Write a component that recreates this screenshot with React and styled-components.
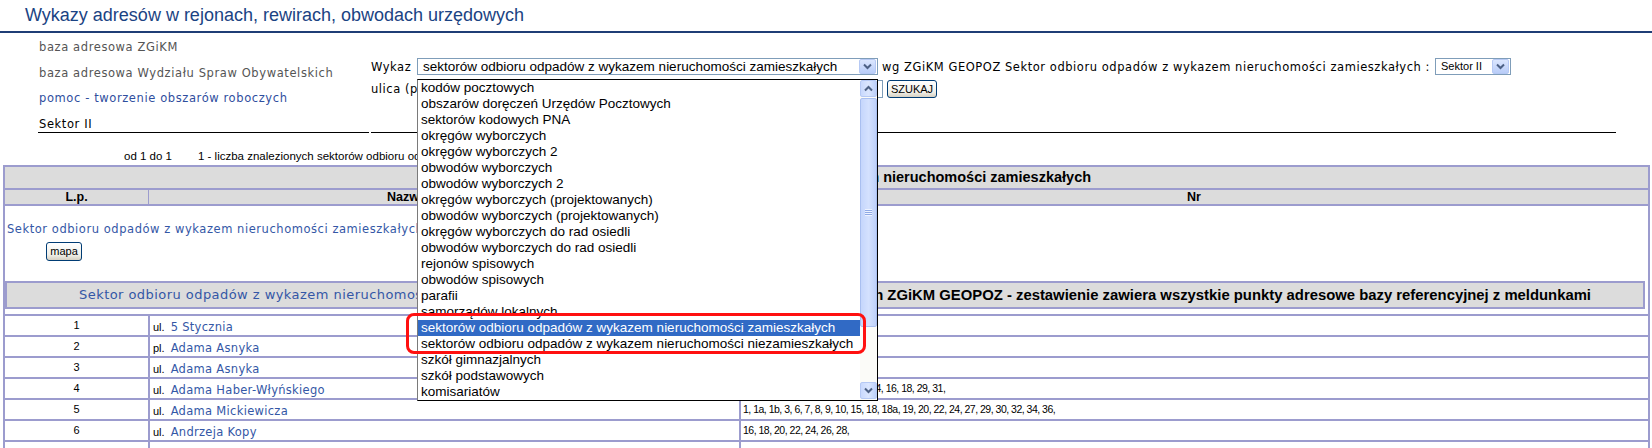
import React from 'react';
import styled, { createGlobalStyle } from 'styled-components';

const VERDANA = `"DejaVu Sans", Verdana, sans-serif`;
const ARIAL = `"Liberation Sans", Arial, sans-serif`;
const LINE = '#9c9cce';
const LINK = '#3457a6';

const GlobalStyle = createGlobalStyle`
  html, body {
    margin: 0;
    padding: 0;
    background: #ffffff;
  }
  body {
    font-family: ${VERDANA};
    overflow: hidden;
  }
`;

const options = [
  'kodów pocztowych',
  'obszarów doręczeń Urzędów Pocztowych',
  'sektorów kodowych PNA',
  'okręgów wyborczych',
  'okręgów wyborczych 2',
  'obwodów wyborczych',
  'obwodów wyborczych 2',
  'okręgów wyborczych (projektowanych)',
  'obwodów wyborczych (projektowanych)',
  'okręgów wyborczych do rad osiedli',
  'obwodów wyborczych do rad osiedli',
  'rejonów spisowych',
  'obwodów spisowych',
  'parafii',
  'samorządów lokalnych',
  'sektorów odbioru odpadów z wykazem nieruchomości zamieszkałych',
  'sektorów odbioru odpadów z wykazem nieruchomości niezamieszkałych',
  'szkół gimnazjalnych',
  'szkół podstawowych',
  'komisariatów',
];

const rows = [
  { lp: '1', type: 'ul.', name: '5 Stycznia', nr: '1, 2, 3, 5,' },
  { lp: '2', type: 'pl.', name: 'Adama Asnyka', nr: '1, 2, 4,' },
  { lp: '3', type: 'ul.', name: 'Adama Asnyka', nr: '2, 3, 5, 7, 9,' },
  { lp: '4', type: 'ul.', name: 'Adama Haber-Włyńskiego', nr: '1, 2, 4, 5, 6, 7, 8, 9, 10, 11, 12, 14, 16, 18, 29, 31,' },
  { lp: '5', type: 'ul.', name: 'Adama Mickiewicza', nr: '1, 1a, 1b, 3, 6, 7, 8, 9, 10, 15, 18, 18a, 19, 20, 22, 24, 27, 29, 30, 32, 34, 36,' },
  { lp: '6', type: 'ul.', name: 'Andrzeja Kopy', nr: '16, 18, 20, 22, 24, 26, 28,' },
  { lp: '', type: '', name: '', nr: '' },
];

function Chevron({ up }) {
  return (
    <svg width="9" height="7" viewBox="0 0 9 7">
      <path
        d={up ? 'M1 5.5 L4.5 2 L8 5.5' : 'M1 1.5 L4.5 5 L8 1.5'}
        fill="none"
        stroke="#4d6185"
        strokeWidth="2"
      />
    </svg>
  );
}

export default function App() {
  return (
    <Page>
      <GlobalStyle />
      <TitleBar>
        <Title>Wykazy adresów w rejonach, rewirach, obwodach urzędowych</Title>
      </TitleBar>

      <Top>
        <LeftCol>
          <LeftLink $color="#555555">baza adresowa ZGiKM</LeftLink>
          <LeftLink $color="#555555">baza adresowa Wydziału Spraw Obywatelskich</LeftLink>
          <LeftLink $color="#2f4e9e">pomoc - tworzenie obszarów roboczych</LeftLink>
          <SectorName>Sektor II</SectorName>
        </LeftCol>
        <RightCol>
          <FormRow $h={17}>
            <FieldLabel>Wykaz</FieldLabel>
            <SelectBox $w={461}>
              <SelectText $size={13.5}>sektorów odbioru odpadów z wykazem nieruchomości zamieszkałych</SelectText>
              <ArrowButton><Chevron /></ArrowButton>
            </SelectBox>
            <QueryText>wg ZGiKM GEOPOZ Sektor odbioru odpadów z wykazem nieruchomości zamieszkałych :</QueryText>
            <SelectBox $w={76} $ml={5}>
              <SelectText $size={11}>Sektor II</SelectText>
              <ArrowButton><Chevron /></ArrowButton>
            </SelectBox>
          </FormRow>
          <FormRow $h={18} $mt={5}>
            <FieldLabel>ulica (początek nazwy)</FieldLabel>
            <TextInput />
            <XpButton $w={50}>SZUKAJ</XpButton>
          </FormRow>
        </RightCol>
      </Top>

      <InfoLine>
        <Count>od 1 do 1</Count>
        1 - liczba znalezionych sektorów odbioru odpadów
      </InfoLine>

      <Table>
        <HeadRow>Wykaz sektorów odbioru odpadów z wykazem nieruchomości zamieszkałych</HeadRow>
        <ColHeadRow>
          <HeadCell>L.p.</HeadCell>
          <HeadCell $divider>Nazwa ulicy / placu</HeadCell>
          <HeadCell $divider>Nr</HeadCell>
        </ColHeadRow>
        <Body>
          <SectorLink>Sektor odbioru odpadów z wykazem nieruchomości zamieszkałych</SectorLink>
          <XpButton $w={36} $h={19} $ml={41} $mt={5}>mapa</XpButton>
          <SummaryBox>
            <SummaryLink>Sektor odbioru odpadów z wykazem nieruchomości zamieszkałych</SummaryLink>
            <SummaryBold>Sektor II - stan ZGiKM GEOPOZ - zestawienie zawiera wszystkie punkty adresowe bazy referencyjnej z meldunkami</SummaryBold>
          </SummaryBox>
          <Rows>
            {rows.map((r, i) => (
              <DataRow key={i}>
                <LpCell>{r.lp}</LpCell>
                <StreetCell>
                  <StreetType>{r.type}</StreetType>
                  {r.name && <StreetLink>{r.name}</StreetLink>}
                </StreetCell>
                <NrCell>{r.nr}</NrCell>
              </DataRow>
            ))}
          </Rows>
        </Body>
      </Table>

      <ListBox>
        <OptionList>
          {options.map((o, i) => (
            <Option key={o} $selected={i === 15}>{o}</Option>
          ))}
        </OptionList>
        <ScrollBar>
          <ScrollButton><Chevron up /></ScrollButton>
          <ScrollThumb>
            <Grip />
          </ScrollThumb>
          <ScrollTrack />
          <ScrollButton><Chevron /></ScrollButton>
        </ScrollBar>
      </ListBox>
      <Annotation />
    </Page>
  );
}

// Styled components

const Page = styled.div`
  position: relative;
  width: 1652px;
  height: 448px;
  overflow: hidden;
  background: #ffffff;
`;

const TitleBar = styled.div`
  height: 33px;
  box-sizing: border-box;
  padding: 4px 0 0 25px;
  border-bottom: 2px solid #1f3d76;
`;

const Title = styled.h1`
  margin: 0;
  font: normal 18px/22px ${ARIAL};
  color: #1b4383;
`;

const Top = styled.div`
  display: grid;
  grid-template-columns: 331px 1245px;
  column-gap: 2px;
  margin-left: 38px;
`;

const LeftCol = styled.div`
  display: flex;
  flex-direction: column;
  padding-top: 2px;
`;

const LeftLink = styled.div`
  padding-left: 1px;
  font: 11.5px/25.5px ${VERDANA};
  letter-spacing: 0.6px;
  color: ${(p) => p.$color};
  white-space: nowrap;
`;

const SectorName = styled.div`
  padding: 4px 0 0 1px;
  font: 11.5px/16px ${VERDANA};
  letter-spacing: 0.6px;
  color: #000000;
  border-bottom: 1px solid #000000;
`;

const RightCol = styled.div`
  padding-top: 25px;
  border-bottom: 1px solid #000000;
`;

const FormRow = styled.div`
  display: flex;
  align-items: center;
  height: ${(p) => p.$h}px;
  margin-top: ${(p) => p.$mt || 0}px;
  font: 11.5px ${VERDANA};
  letter-spacing: 0.55px;
  color: #000000;
`;

const FieldLabel = styled.div`
  width: 46px;
  flex: none;
  white-space: nowrap;
  overflow: visible;
`;

const SelectBox = styled.div`
  width: ${(p) => p.$w}px;
  height: 17px;
  margin-left: ${(p) => p.$ml || 0}px;
  flex: none;
  box-sizing: border-box;
  border: 1px solid #7f9db9;
  background: #ffffff;
  display: flex;
  align-items: center;
  letter-spacing: 0;
`;

const SelectText = styled.div`
  flex: 1;
  padding-left: 5px;
  font: ${(p) => p.$size}px/15px ${ARIAL};
  white-space: nowrap;
  overflow: hidden;
`;

const ArrowButton = styled.div`
  width: 15px;
  height: 13px;
  margin-right: 1px;
  border: 1px solid #b6c9f4;
  border-radius: 2px;
  background: linear-gradient(#dbe6fe, #b9cdf8);
  display: flex;
  align-items: center;
  justify-content: center;
`;

const QueryText = styled.div`
  margin-left: 4px;
  white-space: nowrap;
`;

const TextInput = styled.div`
  width: 466px;
  height: 18px;
  flex: none;
  box-sizing: border-box;
  border: 1px solid #7f9db9;
  background: #ffffff;
`;

const XpButton = styled.div`
  width: ${(p) => p.$w}px;
  height: ${(p) => p.$h || 18}px;
  margin-left: ${(p) => p.$ml || 4}px;
  margin-top: ${(p) => p.$mt || 0}px;
  box-sizing: border-box;
  border: 1px solid #003c74;
  border-radius: 3px;
  background: linear-gradient(#ffffff, #f0efe8 70%, #d6d0c2);
  font: 11px/${(p) => (p.$h || 18) - 2}px ${ARIAL};
  letter-spacing: 0;
  color: #000000;
  text-align: center;
`;

const InfoLine = styled.div`
  height: 32px;
  box-sizing: border-box;
  padding: 17px 0 0 124px;
  font: 11.5px/13px ${ARIAL};
  color: #000000;
  white-space: nowrap;
`;

const Count = styled.span`
  display: inline-block;
  width: 74px;
`;

const Table = styled.div`
  margin-left: 3px;
  width: 1647px;
  box-sizing: border-box;
  border: 2px solid ${LINE};
  border-bottom: none;
`;

const HeadRow = styled.div`
  height: 21px;
  background: #dcdcdc;
  border-bottom: 2px solid ${LINE};
  text-align: center;
  font: bold 14.5px/21px ${ARIAL};
  white-space: nowrap;
`;

const ColHeadRow = styled.div`
  display: grid;
  grid-template-columns: 143px 591px 1fr;
  height: 14px;
  background: #dcdcdc;
  border-bottom: 2px solid ${LINE};
`;

const HeadCell = styled.div`
  border-left: ${(p) => (p.$divider ? `1px solid ${LINE}` : 'none')};
  text-align: center;
  font: bold 12.5px/14px ${ARIAL};
  white-space: nowrap;
`;

const Body = styled.div`
  padding-top: 15px;
`;

const SectorLink = styled.div`
  padding-left: 2px;
  font: 11.5px/16px ${VERDANA};
  letter-spacing: 0.55px;
  color: ${LINK};
  white-space: nowrap;
`;

const SummaryBox = styled.div`
  display: flex;
  justify-content: space-between;
  align-items: center;
  height: 28px;
  margin: 20px 3px 0 0;
  box-sizing: border-box;
  border: 2px solid ${LINE};
  background: #dcdcdc;
  padding: 0 52px 0 72px;
  white-space: nowrap;
  overflow: hidden;
`;

const SummaryLink = styled.span`
  font: 13px ${VERDANA};
  letter-spacing: 0.45px;
  color: ${LINK};
`;

const SummaryBold = styled.span`
  font: bold 14.85px ${ARIAL};
  color: #000000;
`;

const Rows = styled.div`
  margin-top: 5px;
`;

const DataRow = styled.div`
  display: grid;
  grid-template-columns: 143px 591px 1fr;
  height: 19px;
  border-top: 2px solid ${LINE};
`;

const LpCell = styled.div`
  text-align: center;
  font: 11px/19px ${ARIAL};
`;

const StreetCell = styled.div`
  border-left: 2px solid ${LINE};
  padding-left: 3px;
  white-space: nowrap;
  line-height: 19px;
`;

const StreetType = styled.span`
  font: 11px ${ARIAL};
  color: #000000;
`;

const StreetLink = styled.span`
  margin-left: 6px;
  font: 11.5px ${VERDANA};
  letter-spacing: 0.3px;
  color: ${LINK};
`;

const NrCell = styled.div`
  border-left: 2px solid ${LINE};
  padding-left: 2px;
  font: 10.5px/19px ${ARIAL};
  letter-spacing: -0.5px;
  white-space: nowrap;
`;

const ListBox = styled.div`
  position: absolute;
  left: 417px;
  top: 79px;
  width: 461px;
  height: 322px;
  box-sizing: border-box;
  border: 1px solid #000000;
  border-left-color: #7a7a7a;
  background: #ffffff;
  display: flex;
  z-index: 5;
`;

const OptionList = styled.div`
  flex: 1;
  min-width: 0;
`;

const Option = styled.div`
  height: 16px;
  padding-left: 3px;
  font: 13.5px/16px ${ARIAL};
  white-space: nowrap;
  overflow: hidden;
  color: ${(p) => (p.$selected ? '#ffffff' : '#000000')};
  background: ${(p) => (p.$selected ? '#316ac5' : 'transparent')};
`;

const ScrollBar = styled.div`
  width: 17px;
  flex: none;
  display: flex;
  flex-direction: column;
  background: #fbfbf8;
`;

const ScrollButton = styled.div`
  height: 15px;
  margin: 0 0 1px;
  border: 1px solid #b6c9f4;
  border-radius: 2px;
  background: linear-gradient(90deg, #c9d9fd, #dbe6fe 50%, #bccff9);
  display: flex;
  align-items: center;
  justify-content: center;
`;

const ScrollThumb = styled.div`
  height: 227px;
  border: 1px solid #a9bff0;
  border-radius: 2px;
  background: linear-gradient(90deg, #c5d6fc, #d4e1fe 50%, #bfd1fa);
  display: flex;
  align-items: center;
  justify-content: center;
`;

const Grip = styled.div`
  width: 7px;
  height: 7px;
  background: repeating-linear-gradient(#eef3ff 0 1px, #8faae6 1px 2px);
`;

const ScrollTrack = styled.div`
  flex: 1;
`;

const Annotation = styled.div`
  position: absolute;
  left: 406px;
  top: 313px;
  width: 460px;
  height: 41px;
  box-sizing: border-box;
  border: 3px solid #ff1010;
  border-radius: 8px;
  z-index: 6;
`;
